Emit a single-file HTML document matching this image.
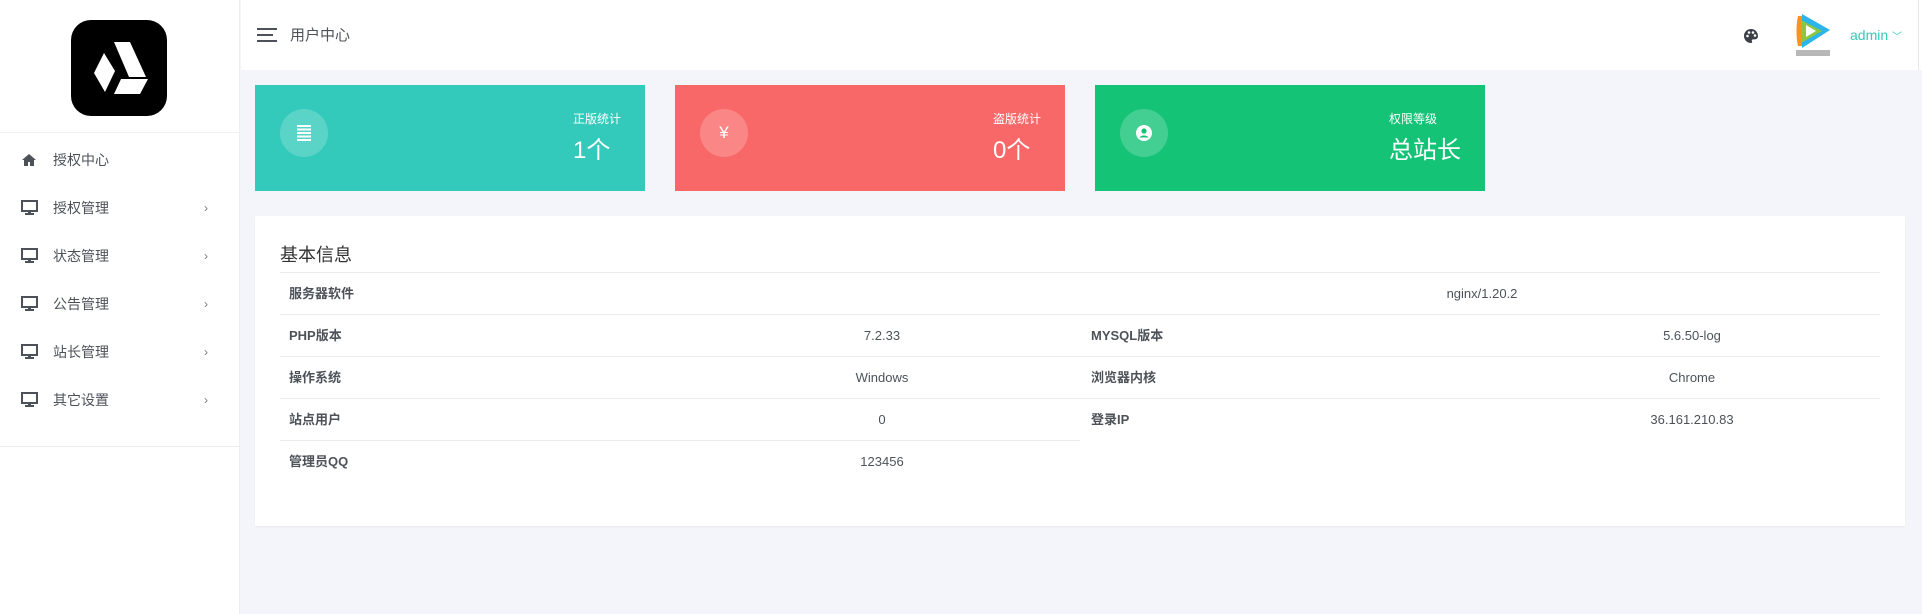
<!DOCTYPE html>
<html><head><meta charset="utf-8"><style>
*{margin:0;padding:0;box-sizing:border-box}
body{width:1922px;height:614px;background:#f4f5fa;font-family:"Liberation Sans","Noto Sans CJK SC",sans-serif;position:relative;overflow:hidden;color:#4d5259}
.a{position:absolute}
.side{left:0;top:0;width:240px;height:614px;background:#fff;border-right:1px solid #eee}
.logo{left:71px;top:20px;width:96px;height:96px;background:#000;border-radius:20px}
.mi{left:0;width:240px;height:20px;font-size:14px;line-height:20px;color:#4d5259}
.mi span{position:absolute;left:53px}
.mi i{position:absolute;left:21px;top:2px}
.mi b{position:absolute;left:204px;font-weight:normal;font-size:12px;color:#777}
.hdr{left:241px;top:0;width:1681px;height:70px;background:#fff}
.card{top:85px;width:390px;height:106px;color:#fff}
.circ{left:25px;top:24px;width:48px;height:48px;border-radius:50%;background:rgba(255,255,255,.2)}
.tb{right:24px;top:26px;text-align:left}
.tb .t{font-size:12px;line-height:16px}
.tb .n{font-size:24px;line-height:32px;margin-top:8px}
.panel{left:255px;top:216px;width:1650px;height:310px;background:#fff;box-shadow:0 1px 2px rgba(0,0,0,.05)}
.row{height:42px;font-size:13px;line-height:42px}
.lb{font-weight:bold;color:#4d5259}
.ln{height:1px;background:#ebebeb}
</style></head><body>
<div class="a side">
 <div class="a logo"><svg width="96" height="96" viewBox="0 0 96 96"><polygon points="43,22 59,22 75,57 58,57" fill="#fff"/><polygon points="33,33 44,51 34,72 23,53" fill="#fff"/><polygon points="50,59 77,59 69,74 43,74" fill="#fff"/></svg></div>
 <div class="a" style="left:0;top:132px;width:240px;height:1px;background:#f1f1f1"></div>
 <div class="a mi" style="top:150px"><i><svg width="16" height="14" viewBox="0 0 16 14"><path d="M8 1L1 7h2v6h4V9h2v4h4V7h2z" fill="#4d5259"/></svg></i><span>授权中心</span></div>
 <div class="a mi" style="top:198px"><i><svg width="17" height="16" viewBox="0 0 17 16"><rect x="1" y="1" width="15" height="10" fill="none" stroke="#4d5259" stroke-width="2"/><rect x="7" y="11" width="3" height="3" fill="#4d5259"/><rect x="4" y="13" width="9" height="2" fill="#4d5259"/></svg></i><span>授权管理</span><b>›</b></div>
 <div class="a mi" style="top:246px"><i><svg width="17" height="16" viewBox="0 0 17 16"><rect x="1" y="1" width="15" height="10" fill="none" stroke="#4d5259" stroke-width="2"/><rect x="7" y="11" width="3" height="3" fill="#4d5259"/><rect x="4" y="13" width="9" height="2" fill="#4d5259"/></svg></i><span>状态管理</span><b>›</b></div>
 <div class="a mi" style="top:294px"><i><svg width="17" height="16" viewBox="0 0 17 16"><rect x="1" y="1" width="15" height="10" fill="none" stroke="#4d5259" stroke-width="2"/><rect x="7" y="11" width="3" height="3" fill="#4d5259"/><rect x="4" y="13" width="9" height="2" fill="#4d5259"/></svg></i><span>公告管理</span><b>›</b></div>
 <div class="a mi" style="top:342px"><i><svg width="17" height="16" viewBox="0 0 17 16"><rect x="1" y="1" width="15" height="10" fill="none" stroke="#4d5259" stroke-width="2"/><rect x="7" y="11" width="3" height="3" fill="#4d5259"/><rect x="4" y="13" width="9" height="2" fill="#4d5259"/></svg></i><span>站长管理</span><b>›</b></div>
 <div class="a mi" style="top:390px"><i><svg width="17" height="16" viewBox="0 0 17 16"><rect x="1" y="1" width="15" height="10" fill="none" stroke="#4d5259" stroke-width="2"/><rect x="7" y="11" width="3" height="3" fill="#4d5259"/><rect x="4" y="13" width="9" height="2" fill="#4d5259"/></svg></i><span>其它设置</span><b>›</b></div>
 <div class="a" style="left:0;top:446px;width:240px;height:1px;background:#ebebeb"></div>
</div>
<div class="a hdr">
 <svg class="a" style="left:16px;top:28px" width="20" height="14" viewBox="0 0 20 14"><rect y="0" width="20" height="2" fill="#4d5259"/><rect y="6" width="16" height="2" fill="#4d5259"/><rect y="12" width="20" height="2" fill="#4d5259"/></svg>
 <div class="a" style="left:49px;top:26px;font-size:15px;line-height:20px">用户中心</div>
 <svg class="a" style="left:1502px;top:28px" width="16" height="16" viewBox="0 0 16 16"><path d="M8 1a7 7 0 0 0 0 14c1.2 0 1.5-.8 1-1.6-.6-1 0-2 1.2-2H12a3 3 0 0 0 3-3C15 4 12 1 8 1z" fill="#3a3f48"/><circle cx="4.5" cy="8" r="1.3" fill="#fff"/><circle cx="6" cy="4.5" r="1.3" fill="#fff"/><circle cx="10" cy="4.5" r="1.3" fill="#fff"/><circle cx="12" cy="7.5" r="1.3" fill="#fff"/></svg>
 <svg class="a" style="left:1551px;top:12px" width="42" height="46" viewBox="0 0 42 46"><path d="M6 4 C4 12 4 26 6 34 L10 34 L10 4z" fill="#f7941d"/><path d="M10 2 L38 18 L10 36z" fill="#2bb5e8"/><path d="M9 8 L30 19 L9 31z" fill="#8dc63f"/><path d="M14 13 L24 19 L14 25z" fill="#fff"/><rect x="4" y="38" width="34" height="6" fill="#888" opacity=".6"/></svg>
 <div class="a" style="left:1609px;top:26px;font-size:14px;line-height:18px;color:#33cabb">admin <span style="font-size:10px">﹀</span></div>
 <div class="a" style="left:1677px;top:0;width:1px;height:70px;background:#e6e6e6"></div>
</div>
<div class="a card" style="left:255px;background:#33cabb"><div class="a circ"><svg style="margin:16px 0 0 17px" width="14" height="16" viewBox="0 0 14 16"><rect y="0" width="14" height="2" fill="#fff"/><rect y="3.5" width="14" height="2" fill="#fff"/><rect y="7" width="14" height="2" fill="#fff"/><rect y="10.5" width="14" height="2" fill="#fff"/><rect y="14" width="14" height="2" fill="#fff"/></svg></div><div class="a tb"><div class="t">正版统计</div><div class="n">1个</div></div></div>
<div class="a card" style="left:675px;background:#f96868"><div class="a circ" style="text-align:center;font-size:17px;line-height:48px">¥</div><div class="a tb"><div class="t">盗版统计</div><div class="n">0个</div></div></div>
<div class="a card" style="left:1095px;background:#15c377"><div class="a circ"><svg style="margin:16px 0 0 16px" width="16" height="16" viewBox="0 0 16 16"><circle cx="8" cy="8" r="8" fill="#fff"/><circle cx="8" cy="6" r="2.6" fill="#15c377"/><path d="M3.5 12.5a5 3.5 0 0 1 9 0" fill="#15c377"/></svg></div><div class="a tb"><div class="t">权限等级</div><div class="n">总站长</div></div></div>
<div class="a panel">
 <div class="a" style="left:25px;top:27px;font-size:18px;line-height:24px;color:#333">基本信息</div>
 <div class="a ln" style="left:25px;top:56px;width:1600px"></div>
 <div class="a row" style="left:25px;top:57px;width:1600px"><span class="a lb" style="left:9px">服务器软件</span><span class="a" style="left:0;width:1600px;text-align:center;padding-left:804px">nginx/1.20.2</span></div>
 <div class="a ln" style="left:25px;top:98px;width:1600px"></div>
 <div class="a ln" style="left:25px;top:140px;width:1600px"></div>
 <div class="a ln" style="left:25px;top:182px;width:1600px"></div>
 <div class="a ln" style="left:25px;top:224px;width:800px"></div>
 <div class="a row" style="left:25px;top:99px;width:800px"><span class="a lb" style="left:9px">PHP版本</span><span class="a" style="left:400px;width:404px;text-align:center">7.2.33</span></div>
 <div class="a row" style="left:25px;top:141px;width:800px"><span class="a lb" style="left:9px">操作系统</span><span class="a" style="left:400px;width:404px;text-align:center">Windows</span></div>
 <div class="a row" style="left:25px;top:183px;width:800px"><span class="a lb" style="left:9px">站点用户</span><span class="a" style="left:400px;width:404px;text-align:center">0</span></div>
 <div class="a row" style="left:25px;top:225px;width:800px"><span class="a lb" style="left:9px">管理员QQ</span><span class="a" style="left:400px;width:404px;text-align:center">123456</span></div>
 <div class="a row" style="left:825px;top:99px;width:800px"><span class="a lb" style="left:11px">MYSQL版本</span><span class="a" style="left:400px;width:424px;text-align:center">5.6.50-log</span></div>
 <div class="a row" style="left:825px;top:141px;width:800px"><span class="a lb" style="left:11px">浏览器内核</span><span class="a" style="left:400px;width:424px;text-align:center">Chrome</span></div>
 <div class="a row" style="left:825px;top:183px;width:800px"><span class="a lb" style="left:11px">登录IP</span><span class="a" style="left:400px;width:424px;text-align:center">36.161.210.83</span></div>
</div>
</body></html>
